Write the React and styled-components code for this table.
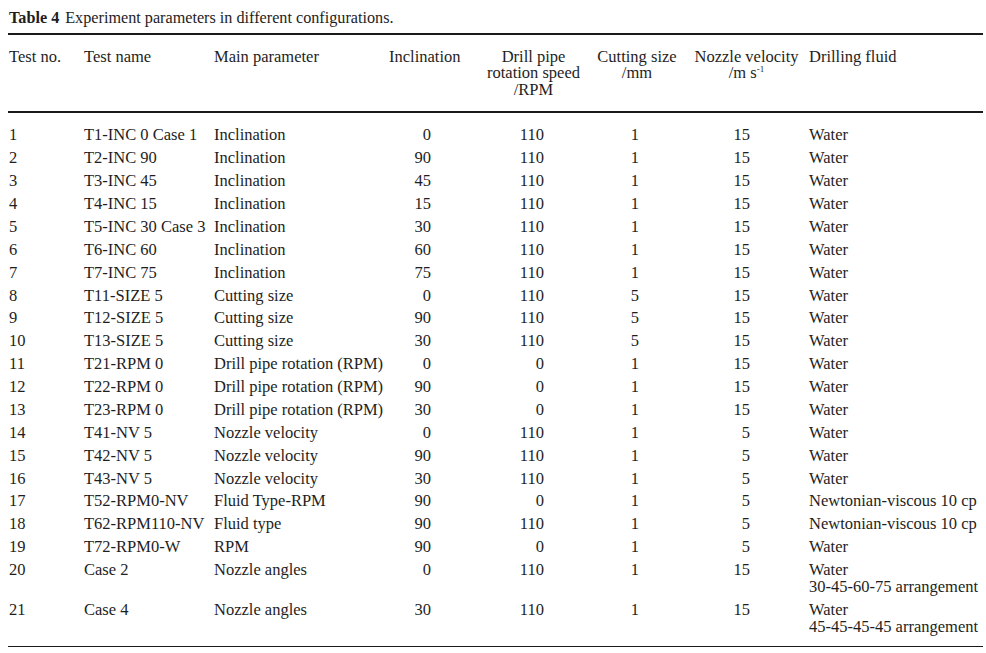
import React from 'react';
import styled, { createGlobalStyle } from 'styled-components';

const GlobalStyle = createGlobalStyle`
  html, body {
    margin: 0;
    padding: 0;
    background: #fff;
  }
  body {
    font-family: "Liberation Serif", "Times New Roman", serif;
    color: #1e1e1e;
  }
`;

const COLUMNS = '76px 130px 175px 88px 113px 94px 125px 174px';

const Page = styled.div`
  padding: 8px 3px 0 8px;
  width: 975px;
`;

const Caption = styled.div`
  font-size: 16.2px;
  line-height: 20px;
  padding-left: 1px;
  margin-bottom: 5px;
`;

const CaptionLabel = styled.span`
  font-weight: bold;
  margin-right: 6px;
`;

const Rule = styled.div`
  height: 1.5px;
  background: #1a1a1a;
`;

const Header = styled.div`
  display: grid;
  grid-template-columns: ${COLUMNS};
  font-size: 16.5px;
  line-height: 16.5px;
  padding: 14px 0 13px;
`;

const HeadCell = styled.div`
  text-align: ${(p) => (p.$center ? 'center' : 'left')};
  padding-left: ${(p) => (p.$first ? '1px' : '0')};
  white-space: nowrap;
`;

const Sup = styled.sup`
  font-size: 9px;
  vertical-align: 6px;
  line-height: 0;
`;

const Body = styled.div`
  padding: 11px 0 8px;
`;

const Row = styled.div`
  display: grid;
  grid-template-columns: ${COLUMNS};
  font-size: 16.5px;
  line-height: 17px;
  padding: 2.95px 0;
`;

const Cell = styled.div`
  white-space: nowrap;
  padding-left: ${(p) => (p.$first ? '1px' : '0')};
`;

const NumCell = styled.div`
  text-align: right;
  padding-right: ${(p) => p.$pad}px;
`;

const rows = [
  ['1', 'T1-INC 0 Case 1', 'Inclination', '0', '110', '1', '15', ['Water']],
  ['2', 'T2-INC 90', 'Inclination', '90', '110', '1', '15', ['Water']],
  ['3', 'T3-INC 45', 'Inclination', '45', '110', '1', '15', ['Water']],
  ['4', 'T4-INC 15', 'Inclination', '15', '110', '1', '15', ['Water']],
  ['5', 'T5-INC 30 Case 3', 'Inclination', '30', '110', '1', '15', ['Water']],
  ['6', 'T6-INC 60', 'Inclination', '60', '110', '1', '15', ['Water']],
  ['7', 'T7-INC 75', 'Inclination', '75', '110', '1', '15', ['Water']],
  ['8', 'T11-SIZE 5', 'Cutting size', '0', '110', '5', '15', ['Water']],
  ['9', 'T12-SIZE 5', 'Cutting size', '90', '110', '5', '15', ['Water']],
  ['10', 'T13-SIZE 5', 'Cutting size', '30', '110', '5', '15', ['Water']],
  ['11', 'T21-RPM 0', 'Drill pipe rotation (RPM)', '0', '0', '1', '15', ['Water']],
  ['12', 'T22-RPM 0', 'Drill pipe rotation (RPM)', '90', '0', '1', '15', ['Water']],
  ['13', 'T23-RPM 0', 'Drill pipe rotation (RPM)', '30', '0', '1', '15', ['Water']],
  ['14', 'T41-NV 5', 'Nozzle velocity', '0', '110', '1', '5', ['Water']],
  ['15', 'T42-NV 5', 'Nozzle velocity', '90', '110', '1', '5', ['Water']],
  ['16', 'T43-NV 5', 'Nozzle velocity', '30', '110', '1', '5', ['Water']],
  ['17', 'T52-RPM0-NV', 'Fluid Type-RPM', '90', '0', '1', '5', ['Newtonian-viscous 10 cp']],
  ['18', 'T62-RPM110-NV', 'Fluid type', '90', '110', '1', '5', ['Newtonian-viscous 10 cp']],
  ['19', 'T72-RPM0-W', 'RPM', '90', '0', '1', '5', ['Water']],
  ['20', 'Case 2', 'Nozzle angles', '0', '110', '1', '15', ['Water', '30-45-60-75 arrangement']],
  ['21', 'Case 4', 'Nozzle angles', '30', '110', '1', '15', ['Water', '45-45-45-45 arrangement']],
];

const App = () => {
  return (
    <Page>
      <GlobalStyle />
      <Caption>
        <CaptionLabel>Table 4</CaptionLabel>Experiment parameters in different configurations.
      </Caption>
      <Rule />
      <Header>
        <HeadCell $first>Test no.</HeadCell>
        <HeadCell>Test name</HeadCell>
        <HeadCell>Main parameter</HeadCell>
        <HeadCell>Inclination</HeadCell>
        <HeadCell $center>
          Drill pipe
          <br />
          rotation speed
          <br />
          /RPM
        </HeadCell>
        <HeadCell $center>
          Cutting size
          <br />
          /mm
        </HeadCell>
        <HeadCell $center>
          Nozzle velocity
          <br />
          /m s<Sup>-1</Sup>
        </HeadCell>
        <HeadCell>Drilling fluid</HeadCell>
      </Header>
      <Rule />
      <Body>
        {rows.map(([no, name, param, inc, rpm, size, vel, fluid]) => (
          <Row key={no}>
            <Cell $first>{no}</Cell>
            <Cell>{name}</Cell>
            <Cell>{param}</Cell>
            <NumCell $pad={46}>{inc}</NumCell>
            <NumCell $pad={46}>{rpm}</NumCell>
            <NumCell $pad={45}>{size}</NumCell>
            <NumCell $pad={59}>{vel}</NumCell>
            <Cell>
              {fluid.map((line) => (
                <div key={line}>{line}</div>
              ))}
            </Cell>
          </Row>
        ))}
      </Body>
      <Rule />
    </Page>
  );
};

export default App;
